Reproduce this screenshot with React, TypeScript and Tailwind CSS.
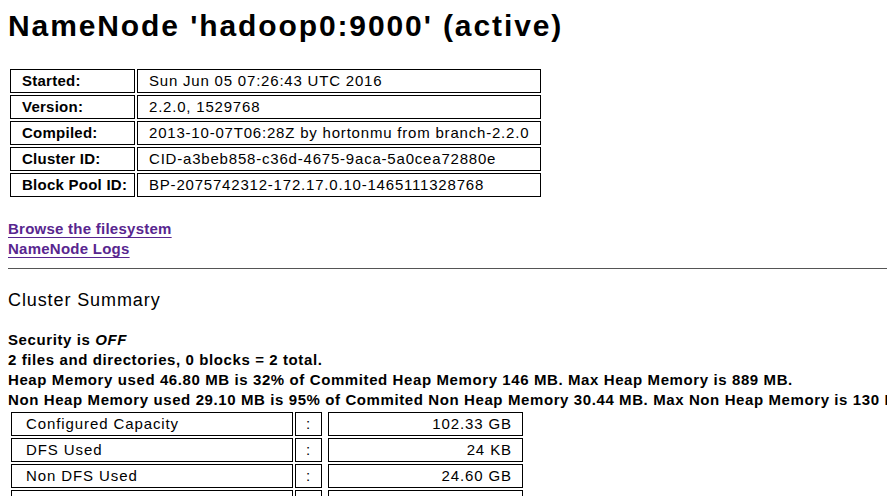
import { FC } from "react";

const info: [string, string][] = [
  ["Started:", "Sun Jun 05 07:26:43 UTC 2016"],
  ["Version:", "2.2.0, 1529768"],
  ["Compiled:", "2013-10-07T06:28Z by hortonmu from branch-2.2.0"],
  ["Cluster ID:", "CID-a3beb858-c36d-4675-9aca-5a0cea72880e"],
  ["Block Pool ID:", "BP-2075742312-172.17.0.10-1465111328768"],
];

const summary: [string, string][] = [
  ["Configured Capacity", "102.33 GB"],
  ["DFS Used", "24 KB"],
  ["Non DFS Used", "24.60 GB"],
  ["DFS Remaining", "77.73 GB"],
];

const App: FC = () => {
  return (
    <div className="h-[496px] w-[887px] overflow-hidden bg-white pl-2 font-['Liberation_Sans',Arial,sans-serif] tracking-[0.9px] text-black">
      <h1 className="pt-[9px] text-[30px] leading-[34px] font-bold tracking-[1.9px] whitespace-nowrap">
        NameNode 'hadoop0:9000' (active)
      </h1>

      {/** NODE INFO */}
      <table className="mt-[24px] border-separate border-spacing-[2px] text-[15px] leading-[20px] whitespace-nowrap">
        <tbody>
          {info.map(([label, value]) => (
            <tr key={label}>
              <th className="w-[125px] border border-black py-px pr-[2px] pl-[11px] text-left font-bold tracking-[0.25px]">
                {label}
              </th>
              <td className="w-[404px] border border-black py-px pr-[6px] pl-[11px] tracking-[0.8px]">
                {value}
              </td>
            </tr>
          ))}
        </tbody>
      </table>

      <div className="mt-[20px] flex flex-col items-start text-[15px] leading-[20px] font-bold tracking-[0.25px] text-[#58268f]">
        <a href="#" className="underline underline-offset-[3px]">
          Browse the filesystem
        </a>
        <a href="#" className="underline underline-offset-[3px]">
          NameNode Logs
        </a>
      </div>

      <hr className="mt-[9px] border-t border-[#555]" />

      <h2 className="mt-[19px] text-[18px] leading-[24px]">Cluster Summary</h2>

      {/** SUMMARY TEXT */}
      <div className="mt-[18px] text-[15px] leading-[20px] font-bold tracking-[0.6px] whitespace-nowrap">
        <div>
          Security is <em>OFF</em>
        </div>
        <div>2 files and directories, 0 blocks = 2 total.</div>
        <div>
          Heap Memory used 46.80 MB is 32% of Commited Heap Memory 146 MB. Max Heap Memory is 889 MB.
        </div>
        <div>
          Non Heap Memory used 29.10 MB is 95% of Commited Non Heap Memory 30.44 MB. Max Non Heap Memory is 130 MB.
        </div>
      </div>

      {/** CAPACITY ROWS */}
      <div className="mt-[2px] flex flex-col gap-[2px] pl-[3px] text-[15px] leading-[20px] whitespace-nowrap">
        {summary.map(([label, value]) => (
          <div key={label} className="flex">
            <div className="w-[282px] border border-black px-[14px] py-px">{label}</div>
            <div className="ml-[2px] w-[27px] border border-black py-px text-center">:</div>
            <div className="ml-[6px] w-[195px] border border-black px-[10px] py-px text-right">
              {value}
            </div>
          </div>
        ))}
      </div>
    </div>
  );
};

export default App;
